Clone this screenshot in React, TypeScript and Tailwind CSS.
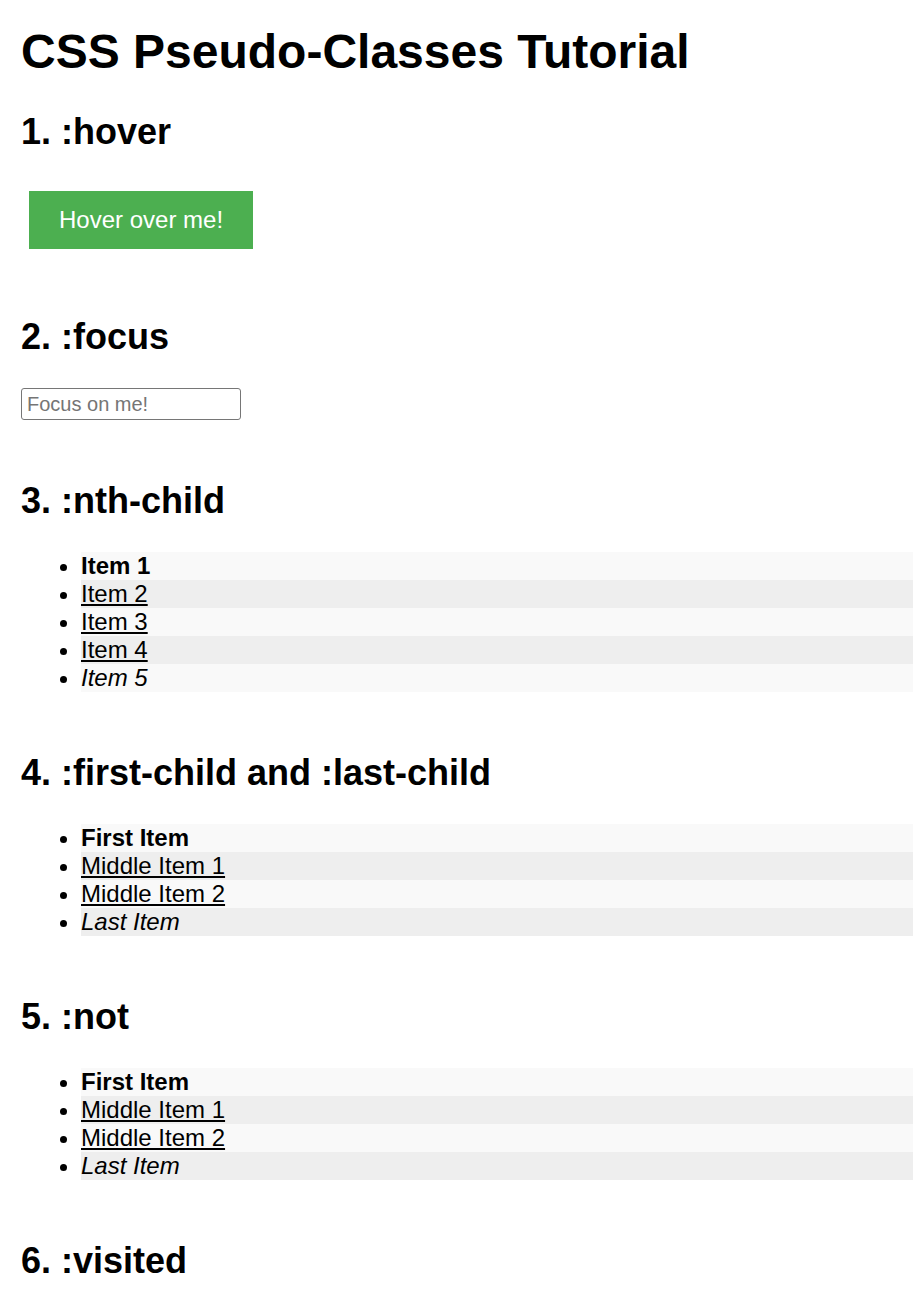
import React from "react";

const rowClass = (i: number, n: number) => {
  const bg = i % 2 === 0 ? "bg-[#f9f9f9]" : "bg-[#eeeeee]";
  const style = i === 0 ? "font-bold" : i === n - 1 ? "italic" : "underline";
  return `${bg} ${style} leading-[28px] h-[28px]`;
};

function List({ items, className }: { items: string[]; className: string }) {
  return (
    <ul className={`list-disc pl-[60px] m-0 ${className}`}>
      {items.map((t, i) => (
        <li key={t} className={rowClass(i, items.length)}>
          {t}
        </li>
      ))}
    </ul>
  );
}

export default function App() {
  return (
    <div className="min-h-[1296px] bg-white text-black font-['Liberation_Sans',Arial,Helvetica,sans-serif] text-[24px] leading-[28px] pt-[24px] pl-[21px]">
      <h1 className="m-0 text-[48px] leading-[55px] font-bold">CSS Pseudo-Classes Tutorial</h1>

      <h2 className="mt-[32px] text-[36px] leading-[42px] font-bold">1. :hover</h2>
      <button className="block mt-[38px] ml-[8px] bg-[#4CAF50] text-white text-[24px] leading-[28px] px-[30px] py-[15px] border-0 cursor-pointer">
        Hover over me!
      </button>

      <h2 className="mt-[67px] text-[36px] leading-[42px] font-bold">2. :focus</h2>
      <input
        type="text"
        placeholder="Focus on me!"
        className="block mt-[30px] w-[220px] h-[32px] border border-[#767676] rounded-[3px] px-[5px] text-[20px] leading-[23px] placeholder:text-[#757575] outline-none"
      />

      <h2 className="mt-[60px] text-[36px] leading-[42px] font-bold">3. :nth-child</h2>
      <List className="mt-[30px]" items={["Item 1", "Item 2", "Item 3", "Item 4", "Item 5"]} />

      <h2 className="mt-[60px] text-[36px] leading-[42px] font-bold">4. :first-child and :last-child</h2>
      <List className="mt-[30px]" items={["First Item", "Middle Item 1", "Middle Item 2", "Last Item"]} />

      <h2 className="mt-[60px] text-[36px] leading-[42px] font-bold">5. :not</h2>
      <List className="mt-[30px]" items={["First Item", "Middle Item 1", "Middle Item 2", "Last Item"]} />

      <h2 className="mt-[60px] text-[36px] leading-[42px] font-bold">6. :visited</h2>
    </div>
  );
}
